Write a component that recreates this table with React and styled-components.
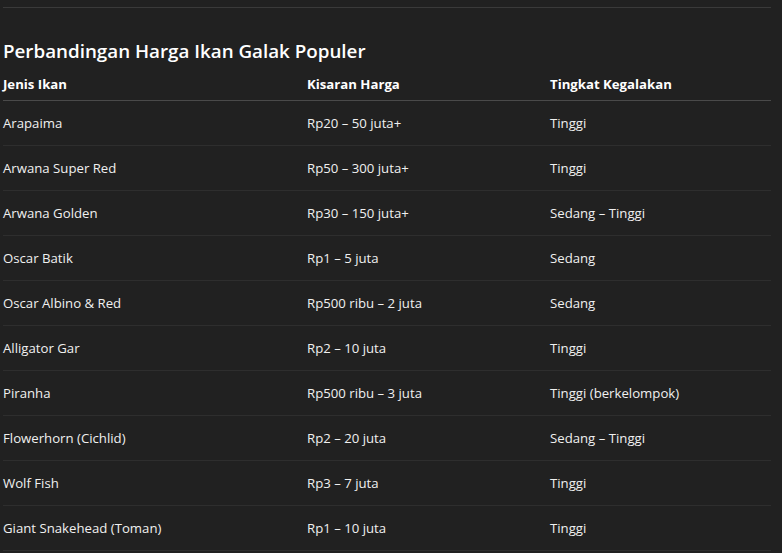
import React from 'react';
import styled, { createGlobalStyle } from 'styled-components';

const GlobalStyle = createGlobalStyle`
  body {
    margin: 0;
    background-color: #212121;
    color: #f0f0f0;
    font-family: 'Open Sans', 'Noto Sans', sans-serif;
  }
`;

const Page = styled.div`
  padding: 7px 11px 0 3px;
`;

const Divider = styled.hr`
  margin: 0;
  border: none;
  border-top: 1px solid #3a3a3a;
`;

const Title = styled.h2`
  margin: 29px 0 9px;
  font-size: 18.8px;
  line-height: 28px;
  font-weight: 600;
  color: #ffffff;
`;

const Table = styled.table`
  width: 100%;
  border-collapse: collapse;
  table-layout: fixed;
  font-size: 13.2px;
`;

const HeadCell = styled.th`
  padding: 0 0 6px;
  line-height: 20px;
  text-align: left;
  font-weight: 700;
  color: #ffffff;
  border-bottom: 1px solid #4a4a4a;
`;

const Cell = styled.td`
  padding: 12px 0;
  line-height: 20px;
  border-bottom: 1px solid #2e2e2e;
`;

const ikan = [
  ['Arapaima', 'Rp20 – 50 juta+', 'Tinggi'],
  ['Arwana Super Red', 'Rp50 – 300 juta+', 'Tinggi'],
  ['Arwana Golden', 'Rp30 – 150 juta+', 'Sedang – Tinggi'],
  ['Oscar Batik', 'Rp1 – 5 juta', 'Sedang'],
  ['Oscar Albino & Red', 'Rp500 ribu – 2 juta', 'Sedang'],
  ['Alligator Gar', 'Rp2 – 10 juta', 'Tinggi'],
  ['Piranha', 'Rp500 ribu – 3 juta', 'Tinggi (berkelompok)'],
  ['Flowerhorn (Cichlid)', 'Rp2 – 20 juta', 'Sedang – Tinggi'],
  ['Wolf Fish', 'Rp3 – 7 juta', 'Tinggi'],
  ['Giant Snakehead (Toman)', 'Rp1 – 10 juta', 'Tinggi'],
];

function App() {
  return (
    <Page>
      <GlobalStyle />
      <Divider />
      <Title>Perbandingan Harga Ikan Galak Populer</Title>
      <Table>
        <colgroup>
          <col style={{ width: '304px' }} />
          <col style={{ width: '243px' }} />
          <col />
        </colgroup>
        <thead>
          <tr>
            <HeadCell>Jenis Ikan</HeadCell>
            <HeadCell>Kisaran Harga</HeadCell>
            <HeadCell>Tingkat Kegalakan</HeadCell>
          </tr>
        </thead>
        <tbody>
          {ikan.map(([nama, harga, galak]) => (
            <tr key={nama}>
              <Cell>{nama}</Cell>
              <Cell>{harga}</Cell>
              <Cell>{galak}</Cell>
            </tr>
          ))}
        </tbody>
      </Table>
    </Page>
  );
}

export default App;
